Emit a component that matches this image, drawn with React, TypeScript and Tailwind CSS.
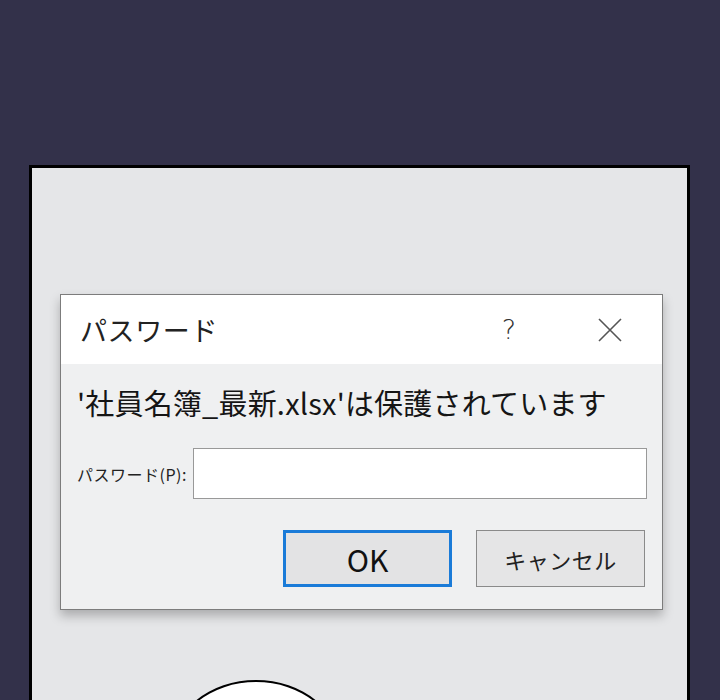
export default function App() {
  return (
    <div className="w-[720px] h-[700px] overflow-hidden bg-[#33314a] pt-[165px] pl-[29px] font-['Noto_Sans_CJK_JP','Noto_Sans',sans-serif]">
      <div className="w-[661px] h-[600px] border-[3px] border-black bg-[#e5e6e8] pt-[126px] pl-[28px]">
        {/* dialog */}
        <div className="w-[603px] border border-[#7c7c7c] bg-[#eff0f1] shadow-[0_6px_10px_rgba(0,0,0,0.25)]">
          <div className="h-[69px] bg-white flex items-center pl-[19px] pr-[40px]">
            <span className="text-[27px] text-[#222] leading-none tracking-[0.6px]">パスワード</span>
            <span className="ml-auto text-[27px] text-[#333] leading-none font-['DejaVu_Sans',sans-serif] font-light">?</span>
            <svg className="ml-[82px]" width="24" height="24" viewBox="0 0 24 24">
              <path d="M1 1L23 23M23 1L1 23" stroke="#555" strokeWidth="1.6" fill="none" />
            </svg>
          </div>
          <div className="pl-[16px] pr-[15px] pt-[18px] pb-[22px]">
            <p className="text-[29px] leading-[40px] text-[#151515] tracking-[0.2px]">'社員名簿_最新.xlsx'は保護されています</p>
            <div className="flex items-center mt-[26px]">
              <span className="text-[16px] text-[#222] w-[116px] tracking-[0.5px]">パスワード(P):</span>
              <div className="flex-1 h-[51px] bg-white border border-[#999]" />
            </div>
            <div className="flex justify-end gap-[24px] mt-[31px] pr-[2px]">
              <button className="w-[169px] h-[57px] border-[3px] border-[#1a7bd8] bg-[#e3e3e4] text-[30px] text-[#111] leading-none">OK</button>
              <button className="w-[169px] h-[57px] border border-[#8a8a8a] bg-[#e5e5e6] text-[22px] text-[#222] leading-none tracking-[0.5px]">キャンセル</button>
            </div>
          </div>
        </div>
        {/* speech bubble */}
        <div className="ml-[111px] mt-[70px] w-[170px] h-[140px] rounded-[50%] border-[2.5px] border-black bg-white" />
      </div>
    </div>
  );
}
